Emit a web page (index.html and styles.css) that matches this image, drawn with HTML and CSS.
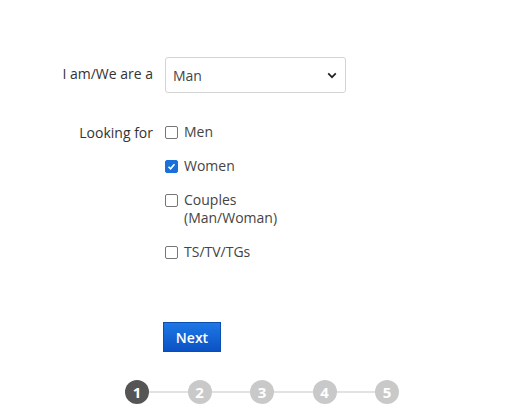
FILE: index.html
```html
<!DOCTYPE html>
<html>
<head>
<meta charset="utf-8">
<link rel="stylesheet" href="styles.css">
</head>
<body>
<div class="page">
  <div class="row row-select">
    <div class="label">I am/We are a</div>
    <div class="control">
      <div class="select">
        <span>Man</span>
        <svg class="chev" width="10" height="7" viewBox="0 0 10 7"><path d="M1.2 1.4 L5 5.2 L8.8 1.4" fill="none" stroke="#222" stroke-width="1.7"/></svg>
      </div>
    </div>
  </div>
  <div class="row row-look">
    <div class="label">Looking for</div>
    <div class="control options">
      <label class="opt"><span class="box"></span><span class="txt">Men</span></label>
      <label class="opt"><span class="box checked"><svg width="13" height="13" viewBox="0 0 13 13"><path d="M3 6.8 L5.4 9.2 L10 3.8" fill="none" stroke="#fff" stroke-width="2"/></svg></span><span class="txt">Women</span></label>
      <label class="opt"><span class="box"></span><span class="txt">Couples<br>(Man/Woman)</span></label>
      <label class="opt"><span class="box"></span><span class="txt">TS/TV/TGs</span></label>
    </div>
  </div>
  <div class="row row-btn">
    <div class="label"></div>
    <div class="control"><button class="next">Next</button></div>
  </div>
  <div class="steps">
    <span class="step active">1</span><span class="line"></span>
    <span class="step">2</span><span class="line"></span>
    <span class="step">3</span><span class="line"></span>
    <span class="step">4</span><span class="line"></span>
    <span class="step">5</span>
  </div>
</div>
</body>
</html>
```
FILE: styles.css
```css
html, body {
  margin: 0;
  padding: 0;
  background: #fff;
}
body {
  font-family: "Open Sans", "Noto Sans", sans-serif;
  font-size: 14px;
  color: #333;
}
.page {
  padding-top: 57px;
}
.row {
  display: grid;
  grid-template-columns: 153px 1fr;
  column-gap: 12px;
}
.label {
  text-align: right;
  color: #333;
}
.row-select .label {
  padding-top: 7px;
}
.select {
  width: 179px;
  height: 34px;
  border: 1px solid #d4d4d4;
  border-radius: 3px;
  box-sizing: content-box;
  display: flex;
  align-items: center;
  justify-content: space-between;
}
.select span {
  padding-left: 7px;
  color: #444;
}
.chev {
  margin-right: 8px;
}
.row-look {
  margin-top: 29px;
}
.row-look .label {
  padding-top: 1px;
}
.options {
  display: flex;
  flex-direction: column;
  gap: 16px;
  padding-top: 1px;
}
.opt {
  display: flex;
  align-items: flex-start;
  gap: 6px;
  line-height: 18px;
  color: #444;
}
.box {
  width: 11px;
  height: 11px;
  border: 1px solid #767676;
  border-radius: 2px;
  margin-top: 3px;
  flex: none;
  display: flex;
  align-items: center;
  justify-content: center;
  background: #fff;
}
.box.checked {
  border-color: #1a6fd8;
  background: #1a6fd8;
}
.box.checked svg {
  width: 11px;
  height: 11px;
}
.row-btn {
  margin-top: 61px;
}
.next {
  margin-left: -2px;
  width: 58px;
  height: 30px;
  border: 1px solid #0a4fb0;
  background: linear-gradient(#1e78e6, #0b52c4);
  color: #fff;
  font-family: "Open Sans", "Noto Sans", sans-serif;
  font-size: 14px;
  font-weight: 600;
  padding: 0;
  cursor: pointer;
}
.steps {
  margin-top: 28px;
  margin-left: 125px;
  display: flex;
  align-items: center;
}
.step {
  width: 24px;
  height: 24px;
  border-radius: 50%;
  background: #c9c9c9;
  color: #fff;
  font-weight: 700;
  font-size: 15px;
  display: flex;
  align-items: center;
  justify-content: center;
  flex: none;
}
.step.active {
  background: #555;
}
.line {
  width: 38.5px;
  height: 2px;
  background: #e2e2e2;
}
```
